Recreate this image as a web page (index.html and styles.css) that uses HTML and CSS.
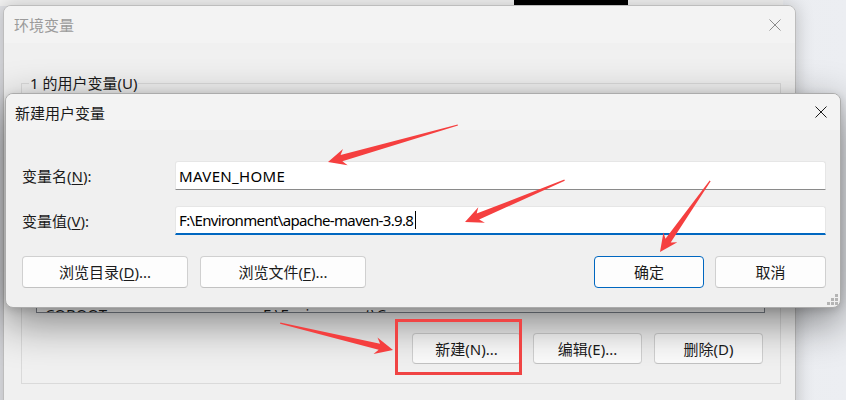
FILE: index.html
```html
<!DOCTYPE html>
<html lang="zh-CN">
<head>
<meta charset="utf-8">
<title>新建用户变量</title>
<link rel="stylesheet" href="styles.css">
</head>
<body>
<div class="desktop">
  <div class="backwin"><div class="blackblock"></div></div>

  <section class="win env">
    <header class="titlebar env-title">
      <span class="title">环境变量</span>
      <svg class="close" width="12" height="12" viewBox="0 0 12 12"><path d="M0.5 0.5L11.5 11.5M11.5 0.5L0.5 11.5"/></svg>
    </header>
    <fieldset class="group">
      <legend>1 的用户变量(U)</legend>
      <div class="group-inner">
        <div class="list">
          <div class="row"><span class="c1">COBOOT</span><span class="c2">F:\Environment\C</span></div>
        </div>
        <div class="btnrow">
          <button class="btn bbtn">新建(N)...</button>
          <button class="btn bbtn">编辑(E)...</button>
          <button class="btn bbtn">删除(D)</button>
        </div>
      </div>
    </fieldset>
  </section>

  <section class="win dlg">
    <header class="titlebar dlg-title">
      <span class="title">新建用户变量</span>
      <svg class="close" width="12" height="12" viewBox="0 0 12 12"><path d="M0.5 0.5L11.5 11.5M11.5 0.5L0.5 11.5"/></svg>
    </header>
    <div class="dlg-body">
      <div class="form">
        <label class="lbl">变量名(<u>N</u>):</label>
        <div class="field name">MAVEN_HOME</div>
        <label class="lbl">变量值(<u>V</u>):</label>
        <div class="field focus path">F:\Environment\apache-maven-3.9.8<span class="caret"></span></div>
      </div>
      <div class="actions">
        <div class="grp left">
          <button class="btn wide">浏览目录(<u>D</u>)...</button>
          <button class="btn wide">浏览文件(<u>F</u>)...</button>
        </div>
        <div class="grp right">
          <button class="btn ok">确定</button>
          <button class="btn cancel">取消</button>
        </div>
      </div>
    </div>
    <svg class="grip" width="12" height="11" viewBox="0 0 12 11">
      <rect x="8" y="0" width="3" height="3"/>
      <rect x="4" y="4" width="3" height="3"/><rect x="8" y="4" width="3" height="3"/>
      <rect x="0" y="8" width="3" height="3"/><rect x="4" y="8" width="3" height="3"/><rect x="8" y="8" width="3" height="3"/>
    </svg>
  </section>

  <svg class="annot" width="846" height="400" viewBox="0 0 846 400">
    <g class="arrow" transform="translate(328 162) rotate(164.1)"><polygon points="-135,-0.6 -14,-3.2 -18,-8.5 0,0 -18,8.5 -14,3.2 -135,0.6"/></g>
    <g class="arrow" transform="translate(465 222) rotate(157.2)"><polygon points="-108,-0.6 -14,-3.2 -18,-8.5 0,0 -18,8.5 -14,3.2 -108,0.6"/></g>
    <g class="arrow" transform="translate(660 252) rotate(125.2)"><polygon points="-87,-0.6 -14,-3.2 -18,-8.5 0,0 -18,8.5 -14,3.2 -87,0.6"/></g>
    <g class="arrow" transform="translate(393 350) rotate(13.4)"><polygon points="-116,-0.6 -14,-3.2 -18,-8.5 0,0 -18,8.5 -14,3.2 -116,0.6"/></g>
    <rect class="box" x="396.5" y="320.5" width="124" height="53"/>
  </svg>
</div>
</body>
</html>
```
FILE: styles.css
```css
html, body { margin: 0; padding: 0; }
body { background: #eceef2; }

.desktop {
  position: relative;
  width: 846px;
  height: 400px;
  overflow: hidden;
  background: linear-gradient(90deg, #e2e3e7 0%, #eceef2 100%);
  font-family: "Noto Sans", "Noto Sans CJK SC", sans-serif;
  font-size: 15px;
  color: #1b1b1b;
}

.backwin {
  position: absolute;
  left: 0;
  top: -60px;
  width: 783px;
  height: 66px;
  box-sizing: border-box;
  padding-left: 514px;
  background: #f2f2f2;
  display: flex;
}
.blackblock { width: 114px; background: #000; }

.win {
  position: absolute;
  box-sizing: border-box;
  border-radius: 8px;
  background: #f0f0f0;
  display: flex;
  flex-direction: column;
  overflow: hidden;
}

.titlebar {
  flex: none;
  display: flex;
  align-items: center;
  justify-content: space-between;
  background: #f3f3f3;
}
.close path { stroke-width: 1; fill: none; }

/* background window */
.env {
  left: 3px;
  top: 5px;
  width: 793px;
  height: 420px;
  border: 1px solid #bdbdbd;
  box-shadow: 0 0 18px rgba(0, 0, 0, 0.22);
}
.env-title { height: 37px; padding: 0 14px 0 10px; }
.env-title .title { color: #9b9b9b; }
.env-title .close path { stroke: #8c8c8c; }

.group {
  margin: 30px 14px 0 17px;
  padding: 0;
  border: 1px solid #dadada;
  min-width: 0;
}
.group legend {
  margin-left: 7px;
  padding: 0 1px;
  line-height: 20px;
}
.group-inner {
  display: flex;
  flex-direction: column;
  padding: 10px 15px 19px 14px;
}
.list {
  height: 210px;
  box-sizing: border-box;
  border: 1px solid #828790;
  background: #fff;
  display: flex;
  flex-direction: column;
  justify-content: flex-end;
  overflow: hidden;
}
.row {
  display: flex;
  height: 22px;
  line-height: 22px;
  margin-bottom: -13px;
  flex: none;
}
.row .c1 { width: 218px; padding-left: 8px; }
.btnrow {
  margin-top: 20px;
  display: flex;
  justify-content: flex-end;
  gap: 12px;
  padding-right: 2px;
}

.btn {
  font: inherit;
  color: #1b1b1b;
  padding: 0;
  margin: 0;
  box-sizing: border-box;
  border: 1px solid #d0d0d0;
  border-bottom-color: #c2c2c2;
  border-radius: 4px;
  background: #fdfdfd;
  display: flex;
  align-items: center;
  justify-content: center;
  line-height: 20px;
}
.bbtn { width: 109px; height: 31px; background: #fbfbfb; }

/* foreground dialog */
.dlg {
  left: 5px;
  top: 93px;
  width: 836px;
  height: 215px;
  border: 1px solid #ababab;
  box-shadow: 0 14px 44px rgba(0, 0, 0, 0.48), 0 2px 8px rgba(0, 0, 0, 0.14);
}
.dlg-title { height: 36px; padding: 0 13px 0 9px; }
.dlg-title .title { color: #1a1a1a; }
.dlg-title .close path { stroke: #1a1a1a; }

.dlg-body { padding: 31px 14px 0 16px; }
.form {
  display: grid;
  grid-template-columns: 153px 1fr;
  row-gap: 16px;
  align-items: center;
}
.lbl { line-height: 20px; }
.lbl u { text-underline-offset: 2px; }
.field {
  height: 29px;
  box-sizing: border-box;
  background: #fff;
  border: 1px solid #e6e6e6;
  border-bottom: 1px solid #8a8a8a;
  border-radius: 3px 3px 0 0;
  padding: 0 3px;
  display: flex;
  align-items: center;
  color: #000;
  white-space: nowrap;
}
.field.name { letter-spacing: 0.35px; }
.field.path { letter-spacing: -0.65px; }
.field.focus { border-bottom: 2px solid #0067c0; }
.caret {
  display: inline-block;
  width: 1px;
  height: 18px;
  background: #000;
  margin-left: 2px;
}

.actions {
  margin-top: 21px;
  display: flex;
  justify-content: space-between;
}
.grp { display: flex; }
.grp.left { gap: 12px; }
.grp.right { gap: 11px; }
.btn.wide { width: 166px; height: 32px; }
.btn.wide u { text-underline-offset: 2px; }
.btn.ok { width: 110px; height: 32px; border: 1px solid #0067c0; }
.btn.cancel { width: 111px; height: 32px; }

.grip {
  position: absolute;
  right: 1px;
  bottom: 2px;
}
.grip rect { fill: #b4b4b4; }

.annot {
  position: absolute;
  left: 0;
  top: 0;
  pointer-events: none;
}
.arrow polygon { fill: #f53f3f; }
.box { fill: none; stroke: #f04444; stroke-width: 3; }
```
